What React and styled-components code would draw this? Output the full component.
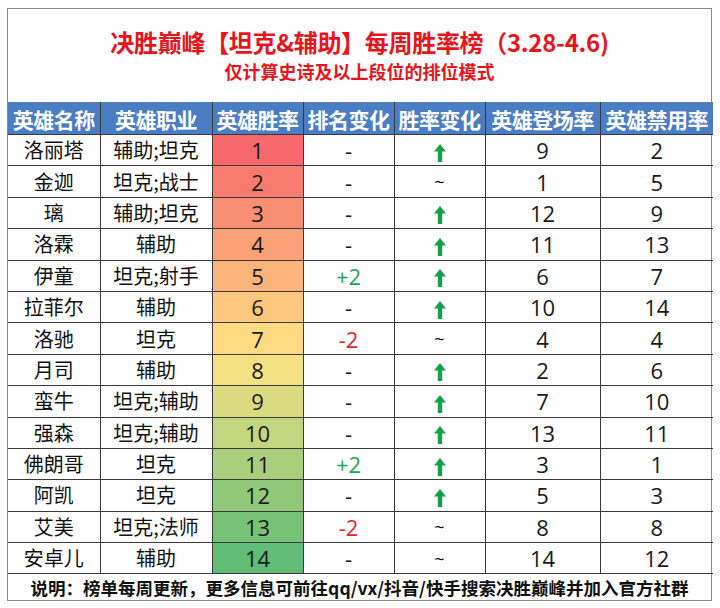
import React from 'react'
import styled, { createGlobalStyle } from 'styled-components'

const GlobalStyle = createGlobalStyle`
  body {
    margin: 0;
    background: #ffffff;
    font-family: "Noto Sans CJK SC", sans-serif;
  }
`;

const heroes = [
    { name: '洛丽塔', role: '辅助;坦克', rankChange: '-', up: true, pick: 9, ban: 2 },
    { name: '金迦', role: '坦克;战士', rankChange: '-', up: false, pick: 1, ban: 5 },
    { name: '璃', role: '辅助;坦克', rankChange: '-', up: true, pick: 12, ban: 9 },
    { name: '洛霖', role: '辅助', rankChange: '-', up: true, pick: 11, ban: 13 },
    { name: '伊童', role: '坦克;射手', rankChange: '+2', up: true, pick: 6, ban: 7 },
    { name: '拉菲尔', role: '辅助', rankChange: '-', up: true, pick: 10, ban: 14 },
    { name: '洛驰', role: '坦克', rankChange: '-2', up: false, pick: 4, ban: 4 },
    { name: '月司', role: '辅助', rankChange: '-', up: true, pick: 2, ban: 6 },
    { name: '蛮牛', role: '坦克;辅助', rankChange: '-', up: true, pick: 7, ban: 10 },
    { name: '强森', role: '坦克;辅助', rankChange: '-', up: true, pick: 13, ban: 11 },
    { name: '佛朗哥', role: '坦克', rankChange: '+2', up: true, pick: 3, ban: 1 },
    { name: '阿凯', role: '坦克', rankChange: '-', up: true, pick: 5, ban: 3 },
    { name: '艾美', role: '坦克;法师', rankChange: '-2', up: false, pick: 8, ban: 8 },
    { name: '安卓儿', role: '辅助', rankChange: '-', up: false, pick: 14, ban: 12 },
];

const headers = ['英雄名称', '英雄职业', '英雄胜率', '排名变化', '胜率变化', '英雄登场率', '英雄禁用率'];
const widths = [92, 112, 91, 91, 91, 115, 113];

// excel style 3 colour scale: red -> yellow -> green
const mix = (a, b, t) => a.map((v, i) => Math.round(v + (b[i] - v) * t));
const scaleColor = (i, total) => {
    const red = [246, 104, 107];
    const yellow = [255, 228, 132];
    const green = [96, 188, 118];
    const t = i / (total - 1);
    const c = t < 0.5 ? mix(red, yellow, t * 2) : mix(yellow, green, (t - 0.5) * 2);
    return `rgb(${c.join(',')})`;
};

const UpArrow = () => (
    <svg width="12" height="18" viewBox="0 0 12 18">
        <path d="M6 0 L12 7.5 L8.2 7.5 L8.2 18 L3.8 18 L3.8 7.5 L0 7.5 Z" fill="#16a04c" />
    </svg>
);

const App = () => {
    return (
        <>
            <GlobalStyle />
            <Frame>
                <TitleBlock>
                    <MainTitle>决胜巅峰【坦克&amp;辅助】每周胜率榜（3.28-4.6)</MainTitle>
                    <SubTitle>仅计算史诗及以上段位的排位模式</SubTitle>
                </TitleBlock>

                <Table>
                    <colgroup>
                        {widths.map((w, i) => <col key={`c${i}`} style={{ width: w }} />)}
                    </colgroup>
                    <thead>
                        <tr>
                            {headers.map((h) => <HeadCell key={h}>{h}</HeadCell>)}
                        </tr>
                    </thead>
                    <tbody>
                        {heroes.map((h, i) => (
                            <Row key={h.name}>
                                <Cell>{h.name}</Cell>
                                <Cell>{h.role}</Cell>
                                <NumCell style={{ background: scaleColor(i, heroes.length) }}>{i + 1}</NumCell>
                                <NumCell $tone={h.rankChange.startsWith('+') ? 'up' : h.rankChange === '-' ? 'flat' : 'down'}>
                                    {h.rankChange}
                                </NumCell>
                                <Cell>{h.up ? <UpArrow /> : <Tilde>~</Tilde>}</Cell>
                                <NumCell>{h.pick}</NumCell>
                                <NumCell>{h.ban}</NumCell>
                            </Row>
                        ))}
                    </tbody>
                </Table>

                <Footer>说明：榜单每周更新，更多信息可前往qq/vx/抖音/快手搜索决胜巅峰并加入官方社群</Footer>
            </Frame>
        </>
    )
}

export default App

const Frame = styled.div`
    width: 705px;
    margin: 8px 0 0 7px;
    border: 1px solid #8a8a8a;
    box-sizing: border-box;
    background: #fff;
`;

const TitleBlock = styled.div`
    height: 93px;
    display: flex;
    flex-direction: column;
    align-items: center;
    justify-content: center;
    gap: 1px;
    color: #e8141c;
    font-weight: bold;
    box-sizing: border-box;
`;

const MainTitle = styled.div`
    font-size: 24px;
    line-height: 30px;
    letter-spacing: -0.3px;
`;

const SubTitle = styled.div`
    font-size: 18px;
    line-height: 26px;
`;

const Table = styled.table`
    width: 100%;
    border-collapse: collapse;
    table-layout: fixed;
`;

const HeadCell = styled.th`
    height: 31px;
    padding: 0;
    background: #4a7dc4;
    color: #fff;
    font-size: 21px;
    font-weight: bold;
    text-align: center;
    white-space: nowrap;
    border: 1px solid #3a3a3a;
    border-top: 1px solid #5a7fb0;
    letter-spacing: -0.5px;
    &:first-child { border-left: none; }
    &:last-child { border-right: none; }
`;

const Row = styled.tr`
    height: 31.4px;
`;

const Cell = styled.td`
    padding: 0;
    text-align: center;
    vertical-align: middle;
    font-size: 20px;
    line-height: 24px;
    color: #111;
    border: 1px solid #3a3a3a;
    white-space: nowrap;
    &:first-child { border-left: none; }
    &:last-child { border-right: none; }
    svg { display: block; margin: 5px auto 0; }
`;

const NumCell = styled(Cell)`
    font-family: "Open Sans", "Noto Sans", sans-serif;
    font-size: 22px;
    color: ${({ $tone }) => ($tone === 'up' ? '#27a35a' : $tone === 'down' ? '#e0262b' : '#1a1a1a')};
`;

const Tilde = styled.span`
    font-family: "Open Sans", sans-serif;
    font-size: 18px;
`;

const Footer = styled.div`
    height: 26px;
    display: flex;
    align-items: center;
    justify-content: center;
    font-size: 17.5px;
    font-weight: bold;
    color: #111;
    white-space: nowrap;
`;
